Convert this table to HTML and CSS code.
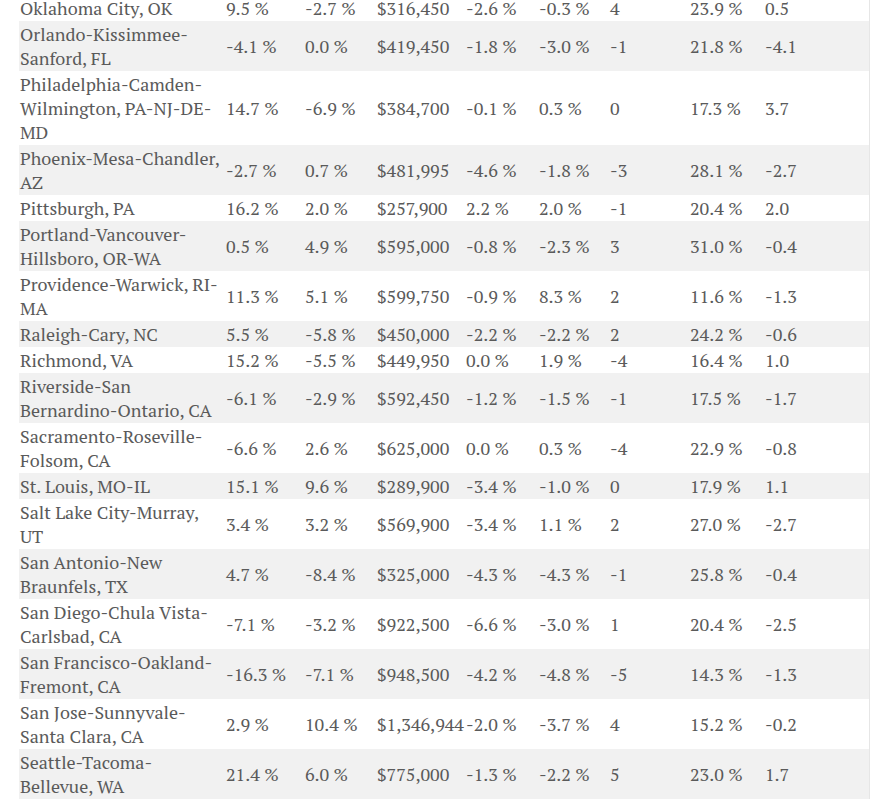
FILE: index.html
```html
<!DOCTYPE html>
<html lang="en">
<head>
<meta charset="utf-8">
<title>Metro housing table</title>
<link rel="stylesheet" href="styles.css">
</head>
<body>
<div class="wrap">
<table class="data">
<colgroup>
<col class="c1"><col class="c2"><col class="c3"><col class="c4"><col class="c5"><col class="c6"><col class="c7"><col class="c8"><col class="c9">
</colgroup>
<tbody>
<tr><td>Oklahoma City, OK</td><td>9.5 %</td><td>-2.7 %</td><td>$316,450</td><td>-2.6 %</td><td>-0.3 %</td><td>4</td><td>23.9 %</td><td>0.5</td></tr>
<tr><td>Orlando-Kissimmee-Sanford, FL</td><td>-4.1 %</td><td>0.0 %</td><td>$419,450</td><td>-1.8 %</td><td>-3.0 %</td><td>-1</td><td>21.8 %</td><td>-4.1</td></tr>
<tr><td>Philadelphia-Camden-Wilmington, PA-NJ-DE-MD</td><td>14.7 %</td><td>-6.9 %</td><td>$384,700</td><td>-0.1 %</td><td>0.3 %</td><td>0</td><td>17.3 %</td><td>3.7</td></tr>
<tr><td>Phoenix-Mesa-Chandler, AZ</td><td>-2.7 %</td><td>0.7 %</td><td>$481,995</td><td>-4.6 %</td><td>-1.8 %</td><td>-3</td><td>28.1 %</td><td>-2.7</td></tr>
<tr><td>Pittsburgh, PA</td><td>16.2 %</td><td>2.0 %</td><td>$257,900</td><td>2.2 %</td><td>2.0 %</td><td>-1</td><td>20.4 %</td><td>2.0</td></tr>
<tr><td>Portland-Vancouver-Hillsboro, OR-WA</td><td>0.5 %</td><td>4.9 %</td><td>$595,000</td><td>-0.8 %</td><td>-2.3 %</td><td>3</td><td>31.0 %</td><td>-0.4</td></tr>
<tr><td>Providence-Warwick, RI-MA</td><td>11.3 %</td><td>5.1 %</td><td>$599,750</td><td>-0.9 %</td><td>8.3 %</td><td>2</td><td>11.6 %</td><td>-1.3</td></tr>
<tr><td>Raleigh-Cary, NC</td><td>5.5 %</td><td>-5.8 %</td><td>$450,000</td><td>-2.2 %</td><td>-2.2 %</td><td>2</td><td>24.2 %</td><td>-0.6</td></tr>
<tr><td>Richmond, VA</td><td>15.2 %</td><td>-5.5 %</td><td>$449,950</td><td>0.0 %</td><td>1.9 %</td><td>-4</td><td>16.4 %</td><td>1.0</td></tr>
<tr><td>Riverside-San Bernardino-Ontario, CA</td><td>-6.1 %</td><td>-2.9 %</td><td>$592,450</td><td>-1.2 %</td><td>-1.5 %</td><td>-1</td><td>17.5 %</td><td>-1.7</td></tr>
<tr><td>Sacramento-Roseville-Folsom, CA</td><td>-6.6 %</td><td>2.6 %</td><td>$625,000</td><td>0.0 %</td><td>0.3 %</td><td>-4</td><td>22.9 %</td><td>-0.8</td></tr>
<tr><td>St. Louis, MO-IL</td><td>15.1 %</td><td>9.6 %</td><td>$289,900</td><td>-3.4 %</td><td>-1.0 %</td><td>0</td><td>17.9 %</td><td>1.1</td></tr>
<tr><td>Salt Lake City-Murray, UT</td><td>3.4 %</td><td>3.2 %</td><td>$569,900</td><td>-3.4 %</td><td>1.1 %</td><td>2</td><td>27.0 %</td><td>-2.7</td></tr>
<tr><td>San Antonio-New Braunfels, TX</td><td>4.7 %</td><td>-8.4 %</td><td>$325,000</td><td>-4.3 %</td><td>-4.3 %</td><td>-1</td><td>25.8 %</td><td>-0.4</td></tr>
<tr><td>San Diego-Chula Vista-Carlsbad, CA</td><td>-7.1 %</td><td>-3.2 %</td><td>$922,500</td><td>-6.6 %</td><td>-3.0 %</td><td>1</td><td>20.4 %</td><td>-2.5</td></tr>
<tr><td>San Francisco-Oakland-Fremont, CA</td><td>-16.3 %</td><td>-7.1 %</td><td>$948,500</td><td>-4.2 %</td><td>-4.8 %</td><td>-5</td><td>14.3 %</td><td>-1.3</td></tr>
<tr><td>San Jose-Sunnyvale-Santa Clara, CA</td><td>2.9 %</td><td>10.4 %</td><td>$1,346,944</td><td>-2.0 %</td><td>-3.7 %</td><td>4</td><td>15.2 %</td><td>-0.2</td></tr>
<tr><td>Seattle-Tacoma-Bellevue, WA</td><td>21.4 %</td><td>6.0 %</td><td>$775,000</td><td>-1.3 %</td><td>-2.2 %</td><td>5</td><td>23.0 %</td><td>1.7</td></tr>
</tbody>
</table>
</div>
</body>
</html>
```
FILE: styles.css
```css
html, body {
  margin: 0;
  padding: 0;
  background: #ffffff;
}
.wrap {
  margin: -5px 0 0 19px;
  width: 850px;
  border-right: 1px solid #e6e6e6;
}
.data {
  width: 850px;
  table-layout: fixed;
  border-collapse: collapse;
  font-family: "PT Serif", "Liberation Serif", serif;
  font-size: 18px;
  line-height: 24px;
  color: #5a5a5a;
}
.data td {
  padding: 1px 1px;
  vertical-align: middle;
  text-align: left;
}
.data td + td {
  white-space: nowrap;
}
.data tr:nth-child(even) td {
  background: #f1f1f1;
}
.c1 { width: 206px; }
.c2 { width: 79px; }
.c3 { width: 72px; }
.c4 { width: 89px; }
.c5 { width: 73px; }
.c6 { width: 71px; }
.c7 { width: 80px; }
.c8 { width: 75px; }
.c9 { width: 105px; }
```
